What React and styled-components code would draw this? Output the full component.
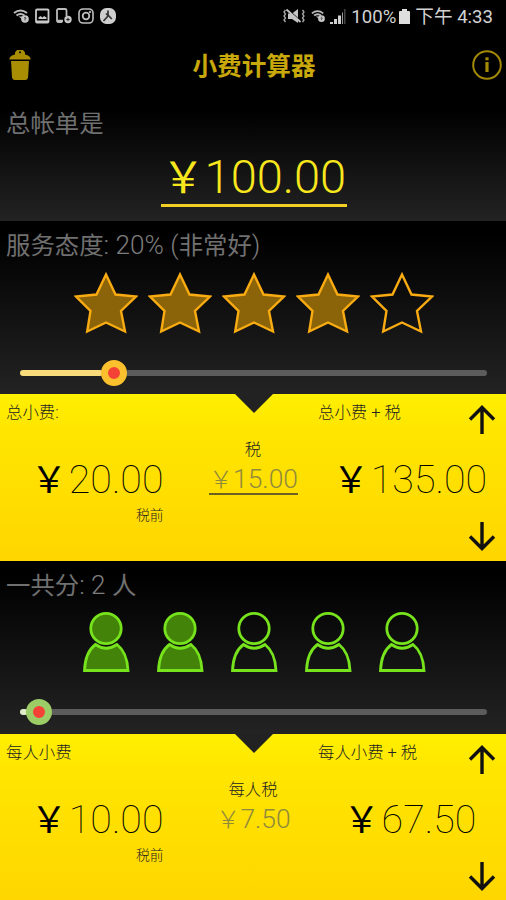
import styled, { createGlobalStyle } from "styled-components";

const GlobalStyle = createGlobalStyle`
  * {
    box-sizing: border-box;
  }
  body {
    margin: 0;
    background: #000;
    font-family: Roboto, "Noto Sans CJK SC", sans-serif;
  }
`;

const ScreenStyled = styled.main`
  width: 506px;
  height: 900px;
  overflow: hidden;
  display: flex;
  flex-direction: column;
  background: #000;
  > * {
    flex-shrink: 0;
  }
`;

const StatusBarStyled = styled.div`
  height: 32px;
  padding: 0 13px 0 13px;
  display: flex;
  align-items: center;
  justify-content: space-between;
  color: #d2d2d2;
`;

const StatusGroupStyled = styled.div`
  display: flex;
  align-items: center;
  gap: ${({ $gap }) => $gap}px;
  svg {
    display: block;
  }
`;

const StatusTextStyled = styled.span`
  font-size: 18.6px;
  line-height: 32px;
  padding-top: 1px;
  white-space: nowrap;
  width: ${({ $width }) => $width}px;
`;

const AppBarStyled = styled.header`
  height: 68px;
  padding: 0 3px 0 8px;
  display: grid;
  grid-template-columns: 32px 1fr 32px;
  color: #a38905;
  svg {
    display: block;
    margin-top: 17px;
  }
`;

const TitleStyled = styled.h1`
  margin: 0;
  padding-right: 3px;
  line-height: 69px;
  font-size: 24.6px;
  font-weight: 700;
  text-align: center;
  color: #c9a80c;
`;

const DarkSectionStyled = styled.section`
  height: ${({ $height }) => $height}px;
  background: linear-gradient(#000, #000 8%, #232323);
  display: flex;
  flex-direction: column;
`;

const SectionLabelStyled = styled.h2`
  margin: 0;
  padding-left: 6px;
  height: 46px;
  line-height: ${({ $line }) => $line || 49}px;
  font-size: 24.4px;
  font-weight: 400;
  color: #707070;
  white-space: pre;
`;

const LatinStyled = styled.span`
  font-size: 26.2px;
  font-weight: 300;
  line-height: 1;
  color: #7c7c7c;
`;

const BillStyled = styled.div`
  align-self: center;
  width: 186px;
  height: 61px;
  margin-left: 2px;
  display: flex;
  justify-content: center;
  border-bottom: 3px solid #f2cf25;
`;

const MoneyStyled = styled.div`
  display: flex;
  align-items: baseline;
  font-size: ${({ $size }) => $size}px;
  line-height: ${({ $line }) => $line}px;
  font-weight: ${({ $weight }) => $weight || 100};
  color: ${({ $color }) => $color || "#000"};
  white-space: nowrap;
`;

const YenStyled = styled.span`
  font-family: "Noto Sans CJK SC", sans-serif;
  font-size: 0.91em;
  font-weight: ${({ $weight }) => $weight || 400};
  line-height: 1;
  margin-right: ${({ $gap }) => $gap || 0}px;
`;

const IconRowStyled = styled.div`
  height: 76px;
  padding: 4px 0 0 1px;
  display: flex;
  justify-content: center;
  gap: 10px;
  svg {
    display: block;
  }
`;

const SliderStyled = styled.div`
  height: 26px;
  margin: ${({ $top }) => $top}px 19px 0 20px;
  display: flex;
  align-items: center;
`;

const TrackStyled = styled.div`
  height: 6px;
  border-radius: 3px;
  background: ${({ $color }) => $color};
  width: ${({ $width }) => ($width ? `${$width}px` : "auto")};
  flex: ${({ $width }) => ($width ? "none" : 1)};
`;

const ThumbStyled = styled.div`
  width: 26px;
  height: 26px;
  margin: 0 -2px;
  border-radius: 50%;
  border: 7px solid ${({ $color }) => $color};
  background: #f44336;
  z-index: 1;
`;

const YellowPanelStyled = styled.section`
  position: relative;
  height: 167px;
  background: linear-gradient(#fff000, #ffe600 20%, #ffd600);
  display: grid;
  grid-template-columns: 186px 134px 186px;
  color: #222;
`;

const NotchStyled = styled.div`
  position: absolute;
  top: 0;
  left: 235px;
  width: 38px;
  height: 19px;
  background: #222;
  clip-path: polygon(0 0, 100% 0, 50% 100%);
`;

const ColumnStyled = styled.div`
  display: flex;
  flex-direction: column;
  align-items: ${({ $align }) => $align || "stretch"};
  padding-top: ${({ $top }) => $top || 0}px;
`;

const SmallLabelStyled = styled.div`
  font-size: ${({ $size }) => $size || 16.4}px;
  height: ${({ $height }) => $height}px;
  line-height: ${({ $line }) => $line}px;
  font-weight: 300;
  white-space: pre;
`;

const LeftTopStyled = styled.div`
  height: 60px;
  padding-left: 6px;
`;

const LeftValueStyled = styled.div`
  width: 163.500px;
  display: flex;
  flex-direction: column;
  align-items: flex-end;
`;

const TaxValueStyled = styled.div`
  width: 89px;
  height: 34px;
  margin-left: 1px;
  display: flex;
  justify-content: center;
  border-bottom: ${({ $underlined }) =>
    $underlined ? "2px solid #6c6020" : "none"};
`;

const RightTopStyled = styled.div`
  height: 60px;
  padding: 0 9px 0 0;
  margin-left: -2px;
  display: flex;
  justify-content: space-between;
  svg {
    margin-top: 10px;
  }
`;

const RightValueStyled = styled.div`
  height: 52px;
  display: flex;
  justify-content: center;
  margin-left: -6px;
`;

const DownStyled = styled.div`
  display: flex;
  justify-content: flex-end;
  padding: 14px 9px 0 0;
`;

const WifiIcon = ({ width = 16 }) => (
  <svg width={width} height={width} viewBox="0 0 16 16" fill="none">
    <path d="M1 5q6.500-5 13 0M3.500 7.500q4-3 8 0" stroke="#bbb" strokeWidth="2" />
    <path d="M5.500 8.500h4L13 14z" fill="#bbb" />
    <circle cx="12" cy="11" r="3.800" fill="#c8c8c8" />
    <path d="M11 10.200q1-1.600 2 0l-1 1.200v1" stroke="#333" />
  </svg>
);

const ImageIcon = () => (
  <svg width="15" height="16" viewBox="0 0 15 16" fill="none">
    <rect x="1" y="1.500" width="12.500" height="13" rx="1" stroke="#c8c8c8" strokeWidth="1.800" />
    <path d="M3.500 11V9.500L5.500 8l2 1.500L9 8l2.500 1.500V11z" fill="#c8c8c8" />
    <path d="M1 13.500h12" stroke="#c8c8c8" strokeWidth="2" />
  </svg>
);

const DeviceIcon = () => (
  <svg width="16" height="16" viewBox="0 0 16 16" fill="none">
    <path d="M6 14H2.500Q1 14 1 12.500v-10Q1 1 2.500 1H9q1.500 0 1.500 1.500V8" stroke="#bbb" strokeWidth="1.800" />
    <path d="M1 13h6" stroke="#bbb" strokeWidth="2.500" />
    <circle cx="12" cy="11.500" r="3.700" fill="#c8c8c8" />
    <path d="M12 9.800v3.400M10.300 11.500h3.400" stroke="#222" />
  </svg>
);

const CameraIcon = () => (
  <svg width="16" height="16" viewBox="0 0 16 16" fill="none" stroke="#bebebe">
    <rect x="1" y="1" width="14" height="14" rx="4" strokeWidth="1.600" />
    <circle cx="8" cy="8" r="3.300" strokeWidth="1.800" />
    <circle cx="12" cy="4" r="0.800" fill="#bebebe" />
  </svg>
);

const RunnerIcon = () => (
  <svg width="16" height="16" viewBox="0 0 16 16" fill="none">
    <rect width="16" height="16" rx="6.500" fill="#cfcfcf" />
    <path d="M8 2.500v5.500L3.500 13M8 7l3.800 4M6 5.500l2 2" stroke="#333" strokeWidth="1.700" />
  </svg>
);

const MuteIcon = () => (
  <svg width="24" height="16" viewBox="0 0 24 16" fill="none">
    <path d="M6 5.500h4L16 1v14l-6-4H6z" fill="#c4c4c4" />
    <path d="m6 1.500 13 12" stroke="#000" strokeWidth="1.200" />
    <path d="m4.500 1.500 14 12.500" stroke="#c4c4c4" strokeWidth="1.700" />
    <path d="M3.500 2 2 4l1.500 2L2 8l1.500 2L2 12l1.500 2M20.500 2 22 4l-1.500 2L22 8l-1.500 2 1.500 2-1.500 2" stroke="#aaa" strokeWidth="1.300" />
  </svg>
);

const SignalIcon = () => (
  <svg width="16" height="15" viewBox="0 0 16 15">
    <path d="M0 13h3v2H0zM4 10h3v5H4zM8 6.500h3V15H8z" fill="#d0d0d0" />
    <path d="M12 3.500h1V15h-1z" fill="#999" />
    <path d="M14 0h1.500v15H14z" fill="#444" />
  </svg>
);

const BatteryIcon = () => (
  <svg width="11" height="15" viewBox="0 0 11 15">
    <path d="M3 0h5v2h2q1 0 1 1v12H0V3q0-1 1-1h2z" fill="#dedede" />
  </svg>
);

const TrashIcon = () => (
  <svg width="24" height="32" viewBox="0 0 24 32">
    <path
      d="M7 3.500 9 1h6l2 2.500v2q4 .5 5.500 3.500v1.500h-21V9Q3 6 7 5.500z"
      fill="#a98e04"
    />
    <circle cx="12" cy="3.300" r="1.100" fill="#111" />
    <path d="M3 12h18l-.9 16q-.3 3-3 3H7q-2.800 0-3-3z" fill="#a98e04" />
  </svg>
);

const InfoIcon = () => (
  <svg width="32" height="32" viewBox="0 0 32 32" fill="none">
    <circle cx="16" cy="16" r="13.800" stroke="#a38905" strokeWidth="2" />
    <path d="M16 13v10" stroke="#a38905" strokeWidth="3.200" />
    <path d="M16 8.300v3" stroke="#a38905" strokeWidth="3.200" />
  </svg>
);

const Star = ({ filled }) => (
  <svg width="64" height="64" viewBox="0 0 64 64">
    <path
      d="M32 3.500 41.500 23.500 62 25.500 47 40 51 60.500 32 51.500 13.200 60.500 16.500 40 2 25.500 22.500 23.500z"
      fill={filled ? "#8b6309" : "none"}
      stroke="#f9ab12"
      strokeWidth="2.400"
    />
  </svg>
);

const Person = ({ filled }) => (
  <svg
    width="64"
    height="64"
    viewBox="0 0 64 64"
    fill={filled ? "#438309" : "none"}
    stroke="#76e31c"
    strokeWidth="2.800"
  >
    <circle cx="32" cy="17.500" r="15.200" />
    <path d="M21.500 33.500Q32 41 43 33.500C50 39 53.500 48 54 59.500H10.500C11 48 14 39 21.500 33.500z" />
  </svg>
);

const Arrow = ({ down }) => (
  <svg
    width="30"
    height="32"
    viewBox="0 0 30 32"
    fill="none"
    stroke="#111"
    strokeWidth="3.400"
  >
    <path d={down ? "M15 2v26M3 16.500 15 28.500 27 16.500" : "M15 30V4M3 15.500 15 3.500 27 15.500"} />
  </svg>
);

// \uFFE5 is the full-width yen sign
const Money = ({ value, yenWeight, yenGap, ...rest }) => (
  <MoneyStyled {...rest}>
    <YenStyled $weight={yenWeight} $gap={yenGap}>
      {"\uFFE5"}
    </YenStyled>
    <span>{value}</span>
  </MoneyStyled>
);

const Slider = ({ top, filled, trackColor, thumbColor }) => (
  <SliderStyled $top={top}>
    <TrackStyled $width={filled} $color={trackColor} />
    <ThumbStyled $color={thumbColor} />
    <TrackStyled $color="#5c5c5c" />
  </SliderStyled>
);

const ResultPanel = ({ tipLabel, tip, taxLabel, tax, totalLabel, total, underlined }) => (
  <YellowPanelStyled>
    <NotchStyled />
    <ColumnStyled>
      <LeftTopStyled>
        <SmallLabelStyled $line={37}>{tipLabel}</SmallLabelStyled>
      </LeftTopStyled>
      <LeftValueStyled>
        <Money $size={39.4} $line={52} yenGap={2} value={tip} />
        <SmallLabelStyled $size={13.8} $line={18}>
          税前
        </SmallLabelStyled>
      </LeftValueStyled>
    </ColumnStyled>
    <ColumnStyled $align="center" $top={44}>
      <SmallLabelStyled $height={23} $line={24}>
        {taxLabel}
      </SmallLabelStyled>
      <TaxValueStyled $underlined={underlined}>
        <Money
          $size={26.4}
          $line={36}
          $weight={300}
          $color="#918a3c"
          yenWeight={300}
          value={tax}
        />
      </TaxValueStyled>
    </ColumnStyled>
    <ColumnStyled>
      <RightTopStyled>
        <SmallLabelStyled $line={37}>{totalLabel}</SmallLabelStyled>
        <Arrow />
      </RightTopStyled>
      <RightValueStyled>
        <Money $size={39.4} $line={52} yenGap={2} value={total} />
      </RightValueStyled>
      <DownStyled>
        <Arrow down />
      </DownStyled>
    </ColumnStyled>
  </YellowPanelStyled>
);

const App = () => {
  const slots = [1, 2, 3, 4, 5];

  return (
    <ScreenStyled>
      <GlobalStyle />
      <StatusBarStyled>
        <StatusGroupStyled $gap={6}>
          <WifiIcon />
          <ImageIcon />
          <DeviceIcon />
          <CameraIcon />
          <RunnerIcon />
        </StatusGroupStyled>
        <StatusGroupStyled $gap={5}>
          <MuteIcon />
          <WifiIcon width={14} />
          <SignalIcon />
          <StatusTextStyled $width={43}>100%</StatusTextStyled>
          <BatteryIcon />
          <StatusTextStyled>下午 4:33</StatusTextStyled>
        </StatusGroupStyled>
      </StatusBarStyled>
      <AppBarStyled>
        <TrashIcon />
        <TitleStyled>小费计算器</TitleStyled>
        <InfoIcon />
      </AppBarStyled>
      <DarkSectionStyled $height={121}>
        <SectionLabelStyled $line={47}>总帐单是</SectionLabelStyled>
        <BillStyled>
          <Money $size={47} $line={62} $weight={300} $color="#f8e71c" value="100.00" />
        </BillStyled>
      </DarkSectionStyled>
      <DarkSectionStyled $height={173}>
        <SectionLabelStyled>
          服务态度<LatinStyled>: 20% (</LatinStyled>非常好<LatinStyled>)</LatinStyled>
        </SectionLabelStyled>
        <IconRowStyled>
          {slots.map((n) => (
            <Star key={n} filled={n <= 4} />
          ))}
        </IconRowStyled>
        <Slider top={17} filled={83} trackColor="#f8dc7c" thumbColor="#fbc02d" />
      </DarkSectionStyled>
      <ResultPanel
        tipLabel="总小费:"
        tip="20.00"
        taxLabel="税"
        tax="15.00"
        totalLabel="总小费 + 税"
        total="135.00"
        underlined
      />
      <DarkSectionStyled $height={173}>
        <SectionLabelStyled>
          一共分<LatinStyled>: 2 </LatinStyled>人
        </SectionLabelStyled>
        <IconRowStyled>
          {slots.map((n) => (
            <Person key={n} filled={n <= 2} />
          ))}
        </IconRowStyled>
        <Slider top={16} filled={8} trackColor="#dcedc8" thumbColor="#9ccc65" />
      </DarkSectionStyled>
      <ResultPanel
        tipLabel="每人小费"
        tip="10.00"
        taxLabel="每人税"
        tax="7.50"
        totalLabel="每人小费 + 税"
        total="67.50"
      />
    </ScreenStyled>
  );
};

export default App;
